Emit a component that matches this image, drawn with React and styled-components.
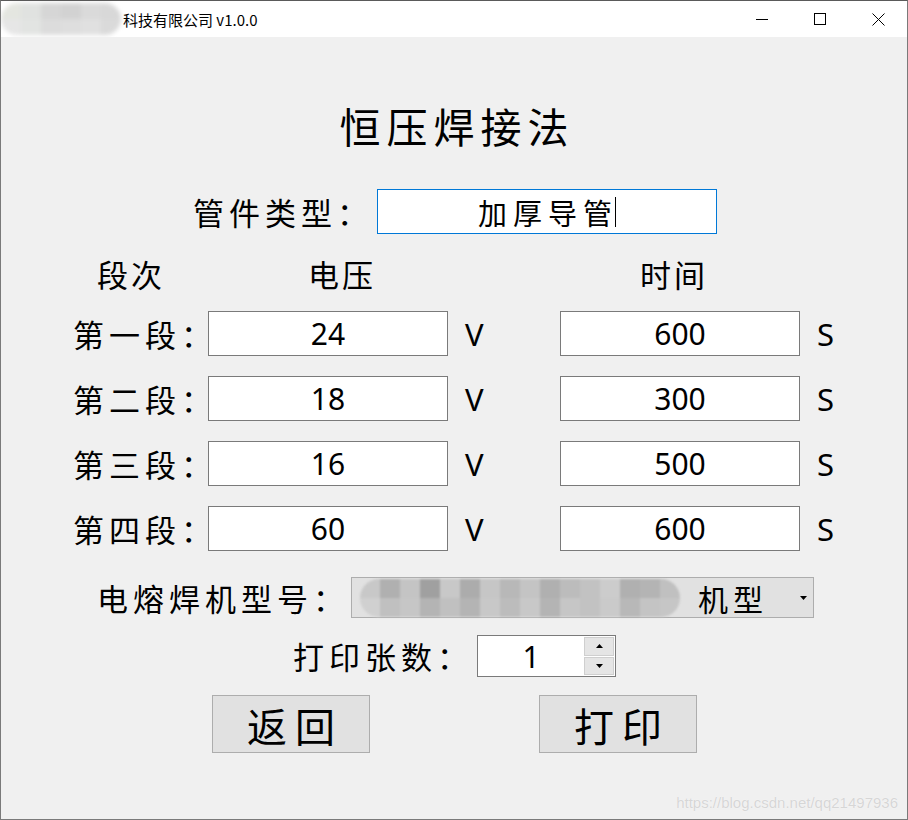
import React from 'react';
import styled, {createGlobalStyle} from 'styled-components';

const GlobalStyle = createGlobalStyle`
    html, body {
        margin: 0;
        padding: 0;
        background: #f0f0f0;
    }
`;

const KAI = `"Noto Sans CJK SC", sans-serif`;
const UI = `"Noto Sans", "Noto Sans CJK SC", sans-serif`;

const Window = styled.div`
    position: relative;
    display: flex;
    flex-direction: column;
    width: 908px;
    height: 820px;
    box-sizing: border-box;
    border: 1px solid #7a7a7a;
    border-top-color: #5a5a5a;
    background: #f0f0f0;
    overflow: hidden;
`;

const TitleBar = styled.div`
    display: flex;
    align-items: center;
    flex: 0 0 36px;
    min-height: 0;
    overflow: hidden;
    background: #ffffff;
`;

const Caption = styled.div`
    flex: 1 1 auto;
    display: flex;
    align-items: center;
    gap: 2px;
    font-family: ${KAI};
    font-size: 15px;
    color: #000;
`;

const Controls = styled.div`
    display: flex;
    height: 100%;
`;

const ControlButton = styled.div`
    display: flex;
    align-items: center;
    justify-content: center;
    width: 58px;
    height: 100%;
`;

const MosaicGrid = styled.div`
    display: grid;
    grid-template-columns: repeat(${p => p.$cols}, ${p => p.$w}px);
    grid-auto-rows: ${p => p.$h}px;
    filter: blur(${p => p.$blur}px);
    border-radius: ${p => p.$h}px;
    overflow: hidden;
    flex: 0 0 auto;
`;

const Tile = styled.div``;

const Mosaic = ({cells, cols, w, h, blur}) => (
    <MosaicGrid $cols={cols} $w={w} $h={h} $blur={blur}>
        {cells.map((c, i) => (
            <Tile key={i} style={{background: c}} />
        ))}
    </MosaicGrid>
);

const Body = styled.div`
    flex: 1 1 auto;
    display: flex;
    flex-direction: column;
`;

const Heading = styled.h1`
    margin: 63px 0 0;
    height: 50px;
    line-height: 50px;
    text-align: center;
    font-family: ${KAI};
    font-weight: 400;
    font-size: 41px;
    letter-spacing: 6px;
    text-indent: 6px;
    color: #000;
`;

const FormRow = styled.div`
    display: flex;
    align-items: center;
    padding-left: ${p => p.$indent}px;
    margin-top: ${p => p.$top}px;
`;

const Label = styled.div`
    flex: 0 0 ${p => p.$width}px;
    font-family: ${KAI};
    font-size: 31px;
    letter-spacing: 5px;
    line-height: 40px;
    color: #000;
    white-space: nowrap;
`;

const TextBox = styled.div`
    display: flex;
    align-items: center;
    justify-content: center;
    box-sizing: border-box;
    width: ${p => p.$width}px;
    height: ${p => p.$height}px;
    background: #fff;
    border: 1px solid ${p => (p.$focused ? '#0078d7' : '#7a7a7a')};
    font-family: ${p => (p.$cjk ? KAI : UI)};
    font-size: ${p => (p.$cjk ? 29 : 30)}px;
    letter-spacing: ${p => (p.$cjk ? 6 : 0)}px;
    color: #000;
`;

const Caret = styled.span`
    display: inline-block;
    width: 1px;
    height: 30px;
    margin-left: -3px;
    background: #000;
    vertical-align: middle;
`;

const HeaderRow = styled.div`
    display: flex;
    margin-top: 19px;
    padding-left: 96px;
    height: 40px;
    align-items: center;
`;

const HeaderCell = styled.div`
    flex: 0 0 ${p => p.$width}px;
    font-family: ${KAI};
    font-size: 31px;
    letter-spacing: 3px;
    color: #000;
`;

const StageGrid = styled.div`
    display: grid;
    grid-template-columns: 207px 240px 112px 240px 1fr;
    grid-auto-rows: 45px;
    row-gap: 20px;
    margin-top: 18px;
    align-items: center;
`;

const StageLabel = styled.div`
    padding-left: 72px;
    font-family: ${KAI};
    font-size: 31px;
    letter-spacing: 5px;
    color: #000;
    white-space: nowrap;
`;

const Unit = styled.div`
    padding-left: 17px;
    font-family: ${UI};
    font-size: 31px;
    color: #000;
`;

const Select = styled.div`
    display: flex;
    align-items: center;
    box-sizing: border-box;
    width: 463px;
    height: 41px;
    padding-left: 8px;
    background: #e1e1e1;
    border: 1px solid #adadad;
`;

const SelectText = styled.span`
    margin-left: 18px;
    font-family: ${KAI};
    font-size: 30px;
    letter-spacing: 5px;
    color: #000;
`;

const Arrow = styled.svg`
    margin-left: auto;
    margin-right: 6px;
`;

const SpinBox = styled.div`
    display: flex;
    box-sizing: border-box;
    width: 139px;
    height: 42px;
    background: #fff;
    border: 1px solid #7a7a7a;
`;

const SpinValue = styled.div`
    flex: 1 1 auto;
    display: flex;
    align-items: center;
    justify-content: center;
    font-family: ${UI};
    font-size: 30px;
    color: #000;
`;

const SpinButtons = styled.div`
    display: flex;
    flex-direction: column;
    gap: 1px;
    width: 30px;
    padding: 1px 1px 1px 0;
`;

const SpinButton = styled.div`
    flex: 1 1 0;
    display: flex;
    align-items: center;
    justify-content: center;
    background: #e5e5e5;
    border: 1px solid #cfcfcf;
`;

const ButtonRow = styled.div`
    display: flex;
    gap: 169px;
    padding-left: 211px;
    margin-top: 18px;
`;

const PushButton = styled.button`
    width: 158px;
    height: 58px;
    margin: 0;
    padding: 0 0 0 8px;
    background: #e1e1e1;
    border: 1px solid #adadad;
    font-family: ${KAI};
    font-size: 40px;
    letter-spacing: 8px;
    color: #000;
`;

const Watermark = styled.div`
    position: absolute;
    right: 9px;
    bottom: 8px;
    font-family: "Liberation Sans", Arial, sans-serif;
    font-size: 15px;
    color: #d6d6d6;
    text-shadow: 0 0 1px #fff;
`;

const logoCells = [
    '#e4e6e0', '#e0e2e0', '#d6d6d6', '#d2d2d2', '#dadada', '#d8d8d8',
    '#e6e6e6', '#e2e4e2', '#dcdcdc', '#dedede', '#e0e0e0', '#dadada',
];

const modelCells = [
    '#c8c8c8', '#b0b0b0', '#c4c4c4', '#a0a0a0', '#c8c8c8', '#acacac', '#c6c6c6', '#b8b8b8',
    '#c4c4c4', '#b0b0b0', '#bcbcbc', '#c2c2c2', '#cccccc', '#b0b0b0', '#b4b4b4', '#c0c0c0',
    '#d0d0d0', '#c0c0c0', '#c6c6c6', '#b4b4b4', '#c0c0c0', '#b4b4b4', '#c8c8c8', '#bcbcbc',
    '#c8c8c8', '#b4b4b4', '#c6c6c6', '#c2c2c2', '#cacaca', '#b8b8b8', '#c4c4c4', '#c6c6c6',
];

const stages = [
    {name: '第一段：', volt: '24', time: '600'},
    {name: '第二段：', volt: '18', time: '300'},
    {name: '第三段：', volt: '16', time: '500'},
    {name: '第四段：', volt: '60', time: '600'},
];

const App = () => (
    <>
        <GlobalStyle />
        <Window>
            <TitleBar>
                <Caption>
                    <Mosaic cells={logoCells} cols={6} w={20} h={16} blur={2} />
                    <span>科技有限公司 v1.0.0</span>
                </Caption>
                <Controls>
                    <ControlButton>
                        <svg width="12" height="12" viewBox="0 0 12 12">
                            <path d="M0 6.5H12" stroke="#000" strokeWidth="1" />
                        </svg>
                    </ControlButton>
                    <ControlButton>
                        <svg width="12" height="12" viewBox="0 0 12 12">
                            <rect x="0.5" y="0.5" width="11" height="11" fill="none" stroke="#000" />
                        </svg>
                    </ControlButton>
                    <ControlButton>
                        <svg width="13" height="13" viewBox="0 0 13 13">
                            <path d="M0.5 0.5L12.5 12.5M12.5 0.5L0.5 12.5" stroke="#000" strokeWidth="1" />
                        </svg>
                    </ControlButton>
                </Controls>
            </TitleBar>

            <Body>
                <Heading>恒压焊接法</Heading>

                <FormRow $indent={192} $top={39}>
                    <Label $width={184}>管件类型：</Label>
                    <TextBox $width={340} $height={45} $focused $cjk>
                        加厚导管<Caret />
                    </TextBox>
                </FormRow>

                <HeaderRow>
                    <HeaderCell $width={211}>段次</HeaderCell>
                    <HeaderCell $width={332}>电压</HeaderCell>
                    <HeaderCell $width={100}>时间</HeaderCell>
                </HeaderRow>

                <StageGrid>
                    {stages.map(s => (
                        <React.Fragment key={s.name}>
                            <StageLabel>{s.name}</StageLabel>
                            <TextBox $width={240} $height={45}>{s.volt}</TextBox>
                            <Unit>V</Unit>
                            <TextBox $width={240} $height={45}>{s.time}</TextBox>
                            <Unit>S</Unit>
                        </React.Fragment>
                    ))}
                </StageGrid>

                <FormRow $indent={96} $top={26}>
                    <Label $width={254}>电熔焊机型号：</Label>
                    <Select>
                        <Mosaic cells={modelCells} cols={16} w={20} h={19} blur={1} />
                        <SelectText>机型</SelectText>
                        <Arrow width="7" height="4" viewBox="0 0 7 4">
                            <path d="M0 0H7L3.5 4Z" fill="#000" />
                        </Arrow>
                    </Select>
                </FormRow>

                <FormRow $indent={292} $top={17}>
                    <Label $width={184}>打印张数：</Label>
                    <SpinBox>
                        <SpinValue>1</SpinValue>
                        <SpinButtons>
                            <SpinButton>
                                <svg width="7" height="4" viewBox="0 0 7 4">
                                    <path d="M0 4H7L3.5 0Z" fill="#000" />
                                </svg>
                            </SpinButton>
                            <SpinButton>
                                <svg width="7" height="4" viewBox="0 0 7 4">
                                    <path d="M0 0H7L3.5 4Z" fill="#000" />
                                </svg>
                            </SpinButton>
                        </SpinButtons>
                    </SpinBox>
                </FormRow>

                <ButtonRow>
                    <PushButton>返回</PushButton>
                    <PushButton>打印</PushButton>
                </ButtonRow>
            </Body>

            <Watermark>https://blog.csdn.net/qq21497936</Watermark>
        </Window>
    </>
);

export default App;
